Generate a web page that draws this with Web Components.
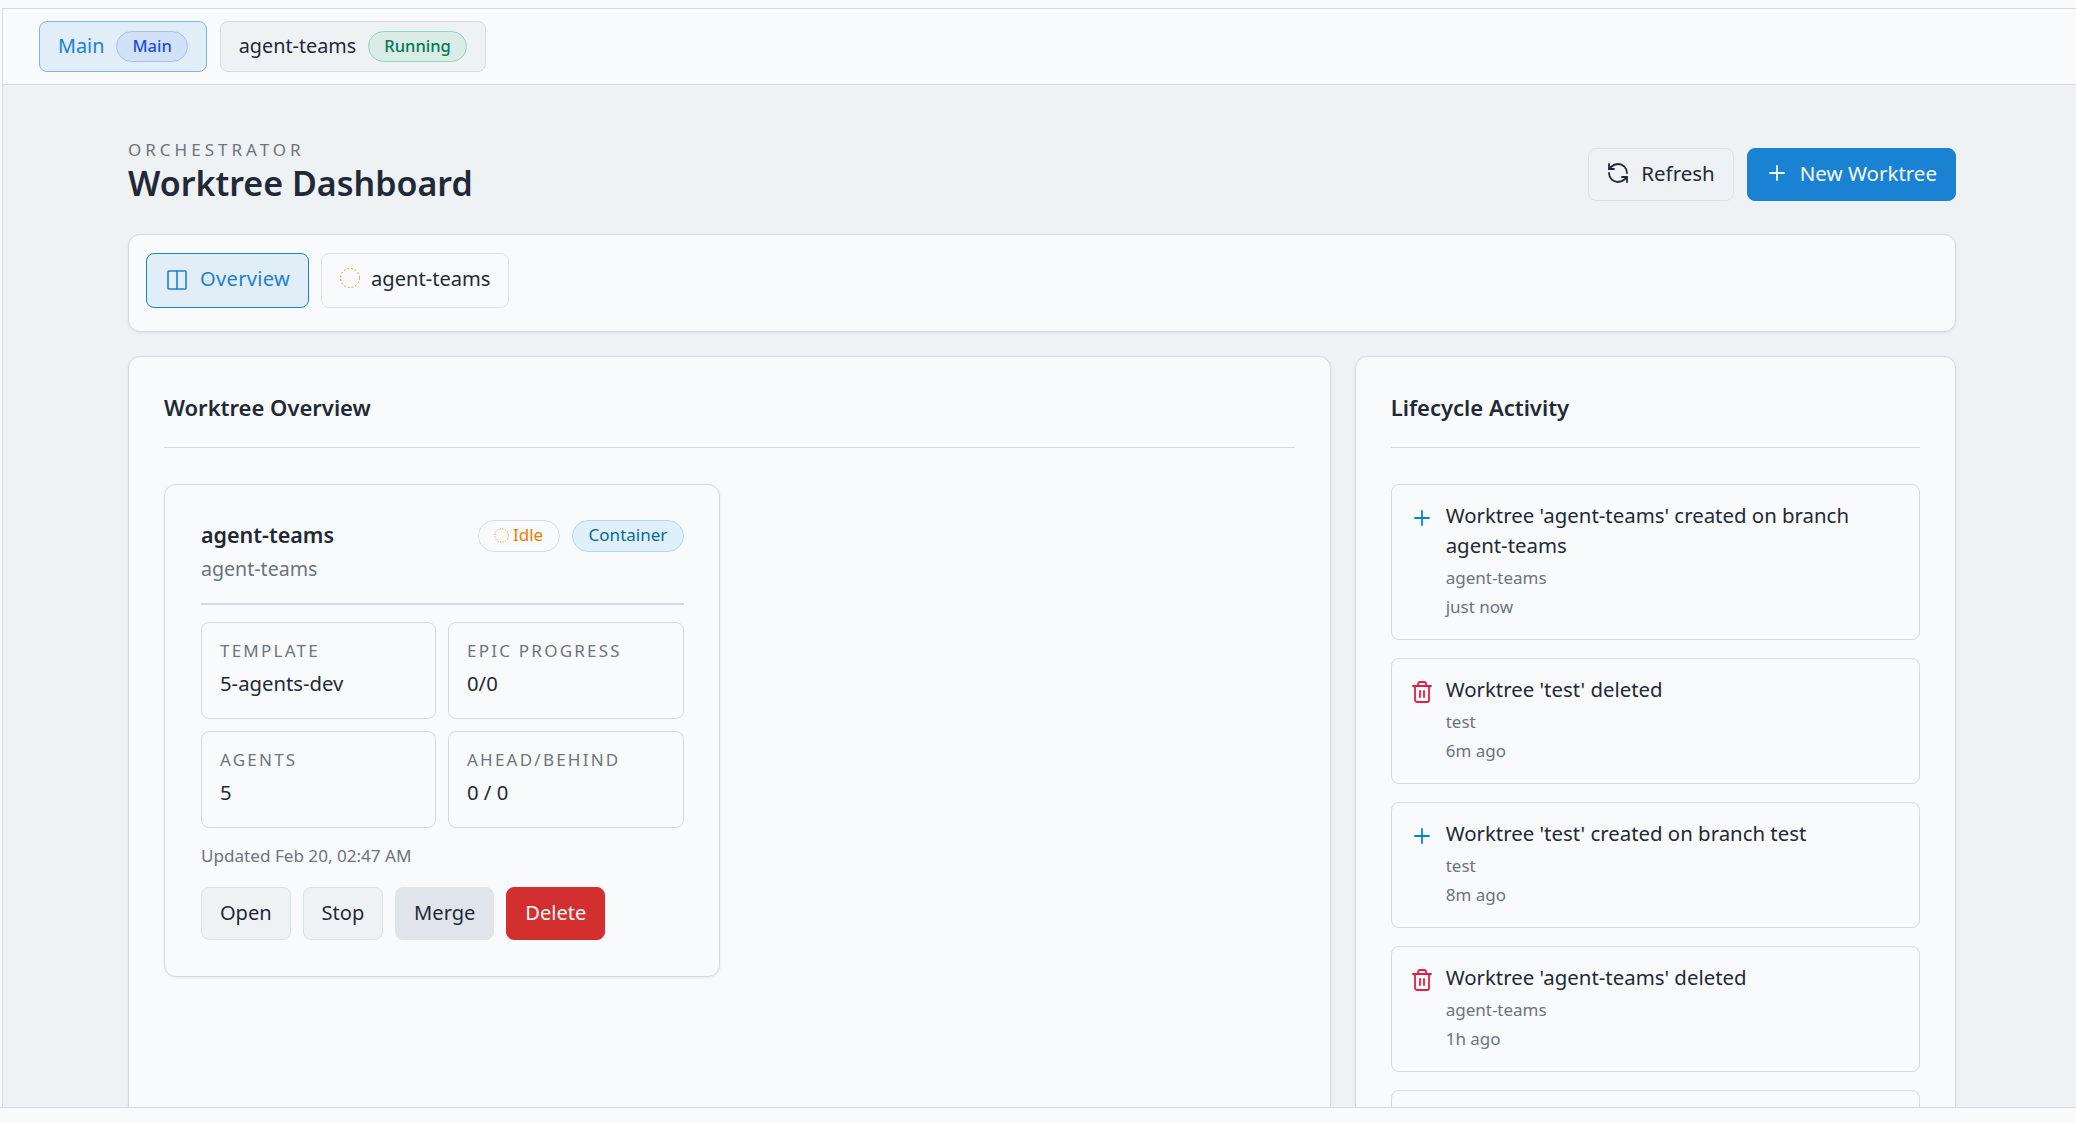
<!DOCTYPE html>
<html lang="en">
<head>
<meta charset="utf-8">
<title>Worktree Dashboard</title>
<style>
  html, body { margin: 0; height: 100%; overflow: hidden; }
  body {
    font-family: "Noto Sans", Roboto, sans-serif;
    color: #1f2937;
    background: #f9fafc;
    --line: #d3dae3;
    --muted: #6b7480;
    --surface: #f9fafc;
    --blue: #1a82d2;
  }
</style>
</head>
<body>

<app-shell>
  <top-tab slot="tabs" active label="Main" pill="Main" tone="blue"></top-tab>
  <top-tab slot="tabs" label="agent-teams" pill="Running" tone="green"></top-tab>

  <page-header eyebrow="ORCHESTRATOR" heading="Worktree Dashboard">
    <action-button icon="refresh">Refresh</action-button>
    <action-button icon="plus" kind="primary">New Worktree</action-button>
  </page-header>

  <nav-card>
    <nav-tab icon="columns" active>Overview</nav-tab>
    <nav-tab icon="idle">agent-teams</nav-tab>
  </nav-card>

  <dash-columns>
    <dash-panel heading="Worktree Overview">
      <worktree-card name="agent-teams" branch="agent-teams" updated="Updated Feb 20, 02:47 AM">
        <stat-box label="TEMPLATE" value="5-agents-dev"></stat-box>
        <stat-box label="EPIC PROGRESS" value="0/0"></stat-box>
        <stat-box label="AGENTS" value="5"></stat-box>
        <stat-box label="AHEAD/BEHIND" value="0 / 0"></stat-box>
        <action-button slot="actions" size="small">Open</action-button>
        <action-button slot="actions" size="small">Stop</action-button>
        <action-button slot="actions" size="small" kind="grey">Merge</action-button>
        <action-button slot="actions" size="small" kind="danger">Delete</action-button>
      </worktree-card>
    </dash-panel>
    <dash-panel heading="Lifecycle Activity">
      <activity-item icon="plus" title="Worktree 'agent-teams' created on branch agent-teams" sub="agent-teams" time="just now"></activity-item>
      <activity-item icon="trash" title="Worktree 'test' deleted" sub="test" time="6m ago"></activity-item>
      <activity-item icon="plus" title="Worktree 'test' created on branch test" sub="test" time="8m ago"></activity-item>
      <activity-item icon="trash" title="Worktree 'agent-teams' deleted" sub="agent-teams" time="1h ago"></activity-item>
      <activity-item></activity-item>
    </dash-panel>
  </dash-columns>
</app-shell>

<script>
const ICONS = {
  refresh: '<path d="M21 12a9 9 0 0 0-9-9 9.75 9.75 0 0 0-6.74 2.74L3 8"/><path d="M3 3v5h5"/><path d="M3 12a9 9 0 0 0 9 9 9.75 9.75 0 0 0 6.74-2.74L21 16"/><path d="M16 16h5v5"/>',
  plus: '<path d="M5 12h14"/><path d="M12 5v14"/>',
  columns: '<rect x="3" y="3" width="18" height="18" rx="1"/><path d="M12 3v18"/>',
  idle: '<circle cx="12" cy="12" r="9.5" stroke-dasharray="1.8 2" stroke-linecap="butt"/>',
  trash: '<path d="M3 6h18"/><path d="M19 6v14c0 1-1 2-2 2H7c-1 0-2-1-2-2V6"/><path d="M8 6V4c0-1 1-2 2-2h4c1 0 2 1 2 2v2"/><path d="M10 11v6"/><path d="M14 11v6"/>'
};

function svgIcon(name, size, width) {
  return `<svg width="${size}" height="${size}" viewBox="0 0 24 24" fill="none" stroke="currentColor"
    stroke-width="${width || 2}" stroke-linecap="round" stroke-linejoin="round" aria-hidden="true">${ICONS[name]}</svg>`;
}

class Base extends HTMLElement {
  constructor() {
    super();
    this.attachShadow({ mode: 'open' });
  }
  attr(name, fallback = '') {
    return this.getAttribute(name) || fallback;
  }
}

class AppShell extends Base {
  connectedCallback() {
    this.shadowRoot.innerHTML = `
      <style>
        :host { display: flex; flex-direction: column; height: 1123px; overflow: hidden; }
        .frame {
          flex: 1; min-height: 0; margin-top: 8px; margin-left: 2px;
          border-top: 1px solid var(--line); border-left: 1px solid var(--line);
          display: flex; flex-direction: column; background: #eff2f5;
        }
        .tabs {
          height: 76px; flex: none; box-sizing: border-box; padding: 12px 36px;
          display: flex; gap: 13px; background: var(--surface);
          border-bottom: 1px solid var(--line);
        }
        main {
          flex: 1; min-height: 0; overflow: hidden; box-sizing: border-box;
          padding: 55px 120px 0 125px; display: flex; flex-direction: column;
        }
        footer { height: 15px; flex: none; margin-left: -3px; background: var(--surface); border-top: 1px solid var(--line); }
      </style>
      <div class="frame">
        <div class="tabs"><slot name="tabs"></slot></div>
        <main><slot></slot></main>
        <footer></footer>
      </div>`;
  }
}

class TopTab extends Base {
  connectedCallback() {
    const active = this.hasAttribute('active');
    this.shadowRoot.innerHTML = `
      <style>
        :host { display: block; }
        .tab {
          height: 51px; box-sizing: border-box; padding: 0 18px;
          display: flex; align-items: center; gap: 12px;
          font-size: 19.8px; border-radius: 8px; border: 1px solid var(--line);
          background: #eff2f5; color: #1f2937;
        }
        .tab.active { background: #e1edf7; border-color: #7db6e6; color: var(--blue); }
        .tab > span:first-child { padding-bottom: 3px; }
        .pill {
          height: 31px; box-sizing: border-box; padding: 0 15px 2px; border-radius: 16px;
          display: flex; align-items: center; font-size: 16.5px; font-weight: 500; border: 1px solid;
        }
        .blue { background: #d2e1f8; border-color: #a3c2f3; color: #1d4ed8; }
        .green { background: #d9ece6; border-color: #8fd6bb; color: #047857; }
      </style>
      <div class="tab ${active ? 'active' : ''}">
        <span>${this.attr('label')}</span>
        <span class="pill ${this.attr('tone')}">${this.attr('pill')}</span>
      </div>`;
  }
}

class PageHeader extends Base {
  connectedCallback() {
    this.shadowRoot.innerHTML = `
      <style>
        :host { display: flex; align-items: center; justify-content: space-between; height: 69px; margin-bottom: 25px; flex: none; }
        .titles { align-self: flex-start; margin-top: -1px; }
        .eyebrow { font-size: 17px; line-height: 22px; letter-spacing: 4px; color: var(--muted); }
        h1 { margin: 0; font-size: 34px; line-height: 44px; font-weight: 600; color: #1f2937; }
        .actions { display: flex; gap: 13px; }
      </style>
      <div class="titles">
        <div class="eyebrow">${this.attr('eyebrow')}</div>
        <h1>${this.attr('heading')}</h1>
      </div>
      <div class="actions"><slot></slot></div>`;
  }
}

class ActionButton extends Base {
  connectedCallback() {
    const icon = this.attr('icon');
    const size = icon ? 20.5 : 20.1;
    const pad = icon ? '0 18px 3px 17px' : '0 17.9px 3px';
    this.shadowRoot.innerHTML = `
      <style>
        :host { display: block; }
        button {
          height: 53px; box-sizing: border-box; padding: ${pad};
          display: flex; align-items: center; gap: 11px;
          font: inherit; font-size: ${size}px; color: #1f2937;
          border-radius: 8px; border: 1px solid #dbe1e8; background: #eff2f5;
        }
        button.primary { background: var(--blue); border-color: var(--blue); color: #f9fafc; }
        button.grey { background: #e0e4eb; border-color: #e0e4eb; }
        button.danger { background: #d32f2f; border-color: #d32f2f; color: #f9fafc; }
        svg { display: block; }
      </style>
      <button class="${this.attr('kind')}">${icon ? svgIcon(icon, 24, 1.8) : ''}<slot></slot></button>`;
  }
}

class NavCard extends Base {
  connectedCallback() {
    this.shadowRoot.innerHTML = `
      <style>
        :host {
          display: flex; gap: 12px; height: 98px; box-sizing: border-box; padding: 18px 17px;
          background: var(--surface); border: 1px solid var(--line); border-radius: 12px;
          box-shadow: 0 1px 3px rgba(31, 41, 55, .08); margin-bottom: 24px; flex: none;
        }
      </style>
      <slot></slot>`;
  }
}

class NavTab extends Base {
  connectedCallback() {
    const idle = this.attr('icon') === 'idle';
    this.shadowRoot.innerHTML = `
      <style>
        :host { display: block; }
        .tab {
          height: 55px; box-sizing: border-box; padding: 0 18px 5px 16px;
          display: flex; align-items: center; gap: 9px; font-size: 20.1px;
          border-radius: 8px; border: 1px solid #dbe1e8; background: #f9fafc;
        }
        .tab.active {
          background: #e1edf7; border-color: var(--blue); color: var(--blue);
          padding-left: 18px; gap: 11px; letter-spacing: .3px;
        }
        .tab.active .glyph { margin-top: 4px; }
        .idle { color: #e68a2e; }
        .glyph { display: flex; }
      </style>
      <div class="tab ${this.hasAttribute('active') ? 'active' : ''}">
        <span class="glyph ${idle ? 'idle' : ''}">${svgIcon(this.attr('icon'), 24, idle ? 1 : 1.6)}</span>
        <slot></slot>
      </div>`;
  }
}

class DashColumns extends Base {
  connectedCallback() {
    this.shadowRoot.innerHTML = `
      <style>
        :host { display: grid; grid-template-columns: 2fr 1fr; gap: 24px; flex: 1; min-height: 0; margin-bottom: -20px; }
      </style>
      <slot></slot>`;
  }
}

class DashPanel extends Base {
  connectedCallback() {
    this.shadowRoot.innerHTML = `
      <style>
        :host {
          display: block; box-sizing: border-box; padding: 0 35px;
          background: var(--surface); border: 1px solid var(--line); border-radius: 12px;
          box-shadow: 0 1px 3px rgba(31, 41, 55, .08); overflow: hidden; min-width: 0;
        }
        h2 {
          margin: 0 0 36px; padding: 34px 0 24px; border-bottom: 1px solid var(--line);
          font-size: 22px; line-height: 32px; font-weight: 600;
        }
        .body { display: flex; flex-direction: column; gap: 18px; }
      </style>
      <h2>${this.attr('heading')}</h2>
      <div class="body"><slot></slot></div>`;
  }
}

class WorktreeCard extends Base {
  connectedCallback() {
    this.shadowRoot.innerHTML = `
      <style>
        :host {
          display: block; width: 556px; box-sizing: border-box; padding: 36px 35px 36px 36px;
          background: var(--surface); border: 1px solid var(--line); border-radius: 12px;
          box-shadow: 0 1px 3px rgba(31, 41, 55, .08);
        }
        .head { display: flex; justify-content: space-between; padding-bottom: 22px; border-bottom: 2px solid var(--line); }
        .name { font-size: 21.5px; line-height: 27px; font-weight: 600; }
        .branch { font-size: 19.6px; line-height: 24px; color: var(--muted); margin-top: 9px; }
        .pills { display: flex; gap: 12px; align-items: flex-start; margin-top: -1px; }
        .pill {
          height: 32px; box-sizing: border-box; padding: 0 15.7px 3px; border-radius: 16px; border: 1px solid;
          display: flex; align-items: center; gap: 3px; font-size: 17px;
        }
        .idle { border-color: #d7dde5; color: #e67e00; padding-left: 14px; }
        .idle svg { margin-top: 2px; }
        .container { background: #dff0fa; border-color: #a9dcf7; color: #0369a1; }
        .stats { display: grid; grid-template-columns: 235px 1fr; gap: 12px; margin-top: 17px; }
        .updated { font-size: 17.1px; line-height: 24px; color: var(--muted); margin-top: 16px; }
        .actions { display: flex; gap: 12px; margin-top: 19px; }
      </style>
      <div class="head">
        <div>
          <div class="name">${this.attr('name')}</div>
          <div class="branch">${this.attr('branch')}</div>
        </div>
        <div class="pills">
          <span class="pill idle">${svgIcon('idle', 17, 1.1)}Idle</span>
          <span class="pill container">Container</span>
        </div>
      </div>
      <div class="stats"><slot></slot></div>
      <div class="updated">${this.attr('updated')}</div>
      <div class="actions"><slot name="actions"></slot></div>`;
  }
}

class StatBox extends Base {
  connectedCallback() {
    this.shadowRoot.innerHTML = `
      <style>
        :host {
          display: block; height: 97px; box-sizing: border-box; padding: 16px 18px 0;
          border: 1px solid var(--line); border-radius: 8px;
        }
        .label { font-size: 17px; line-height: 24px; letter-spacing: 2.23px; color: var(--muted); }
        .value { font-size: 20.3px; line-height: 28px; margin-top: 6px; }
      </style>
      <div class="label">${this.attr('label')}</div>
      <div class="value">${this.attr('value')}</div>`;
  }
}

class ActivityItem extends Base {
  connectedCallback() {
    const name = this.attr('icon');
    // hyphenated names stay whole when the title wraps
    const title = this.attr('title').replace(/\S+-\S+/g, (w) => `<span class="word">${w}</span>`);
    const body = name ? `
      <span class="icon ${name}">${svgIcon(name, 24, 1.8)}</span>
      <div>
        <div class="title">${title}</div>
        <div class="meta">${this.attr('sub')}</div>
        <div class="meta">${this.attr('time')}</div>
      </div>` : '';
    this.shadowRoot.innerHTML = `
      <style>
        :host {
          display: flex; gap: 12px; box-sizing: border-box; padding: 15px 18px 20px 18px; flex: none;
          border: 1px solid var(--line); border-radius: 8px; min-height: 126px;
        }
        .icon { width: 24px; height: 24px; margin-top: 5.5px; flex: none; }
        .plus { color: #0284c7; }
        .trash { color: #e11d48; }
        .title { font-size: 20.4px; line-height: 30px; }
        .word { white-space: nowrap; }
        .meta { font-size: 17px; line-height: 24px; color: var(--muted); margin-top: 5.5px; }
      </style>
      ${body}`;
  }
}

customElements.define('app-shell', AppShell);
customElements.define('top-tab', TopTab);
customElements.define('page-header', PageHeader);
customElements.define('action-button', ActionButton);
customElements.define('nav-card', NavCard);
customElements.define('nav-tab', NavTab);
customElements.define('dash-columns', DashColumns);
customElements.define('dash-panel', DashPanel);
customElements.define('worktree-card', WorktreeCard);
customElements.define('stat-box', StatBox);
customElements.define('activity-item', ActivityItem);
</script>
</body>
</html>
